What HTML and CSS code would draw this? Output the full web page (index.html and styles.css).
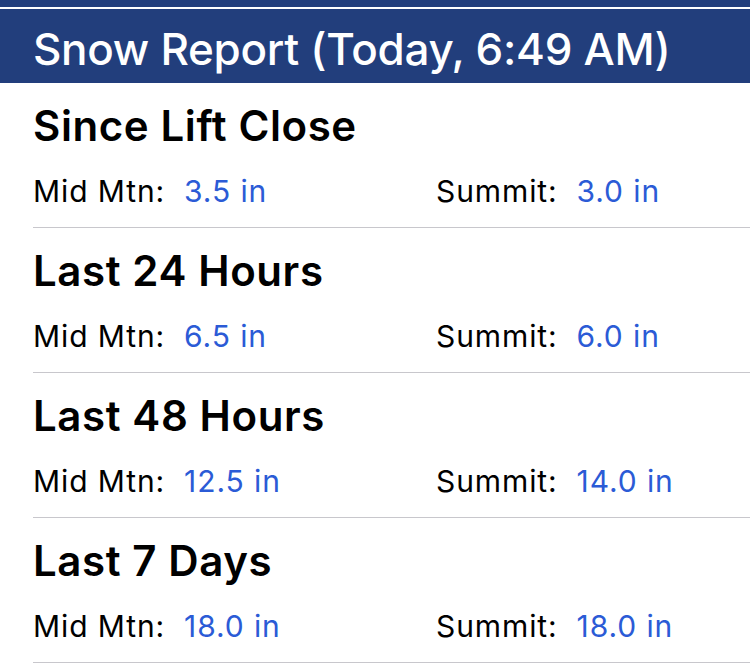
FILE: index.html
```html
<!DOCTYPE html>
<html>
<head>
<meta charset="utf-8">
<link rel="stylesheet" href="styles.css">
</head>
<body>
<div class="topstrip"></div>
<div class="topline"></div>
<header class="header"><h1 class="title">Snow Report (Today, 6:49 AM)</h1></header>
<main class="list">
  <section class="section">
    <h2 class="heading">Since Lift Close</h2>
    <div class="row">
      <div class="cell"><span class="label">Mid Mtn:</span><span class="value">3.5 in</span></div>
      <div class="cell"><span class="label">Summit:</span><span class="value">3.0 in</span></div>
    </div>
  </section>
  <section class="section">
    <h2 class="heading">Last 24 Hours</h2>
    <div class="row">
      <div class="cell"><span class="label">Mid Mtn:</span><span class="value">6.5 in</span></div>
      <div class="cell"><span class="label">Summit:</span><span class="value">6.0 in</span></div>
    </div>
  </section>
  <section class="section">
    <h2 class="heading">Last 48 Hours</h2>
    <div class="row">
      <div class="cell"><span class="label">Mid Mtn:</span><span class="value">12.5 in</span></div>
      <div class="cell"><span class="label">Summit:</span><span class="value">14.0 in</span></div>
    </div>
  </section>
  <section class="section">
    <h2 class="heading">Last 7 Days</h2>
    <div class="row">
      <div class="cell"><span class="label">Mid Mtn:</span><span class="value">18.0 in</span></div>
      <div class="cell"><span class="label">Summit:</span><span class="value">18.0 in</span></div>
    </div>
  </section>
</main>
</body>
</html>
```
FILE: styles.css
```css
html, body {
  margin: 0;
  padding: 0;
  background: #ffffff;
  font-family: Inter, "Liberation Sans", sans-serif;
  color: #000;
  overflow: hidden;
}
.topstrip {
  height: 7px;
  background: #223e7c;
}
.topline {
  height: 2px;
  background: #ffffff;
}
.header {
  height: 74px;
  background: #223e7c;
  padding: 18px 0 0 33px;
  box-sizing: border-box;
}
.title {
  margin: 0;
  color: #fff;
  font-size: 44px;
  font-weight: 500;
  line-height: 44px;
  letter-spacing: -0.3px;
  white-space: nowrap;
}
.list {
  margin-left: 33px;
}
.section {
  height: 145px;
  box-sizing: border-box;
  border-bottom: 1px solid #c8c7cc;
  display: flex;
  flex-direction: column;
}
.heading {
  margin: 22px 0 0 0;
  font-size: 42px;
  font-weight: 600;
  line-height: 42px;
  letter-spacing: 0.6px;
}
.row {
  display: grid;
  grid-template-columns: 403px 1fr;
  margin-top: 27px;
  font-size: 30px;
  line-height: 34px;
  letter-spacing: 0.9px;
}
.value {
  color: #2b5bd6;
  margin-left: 19px;
}
```
